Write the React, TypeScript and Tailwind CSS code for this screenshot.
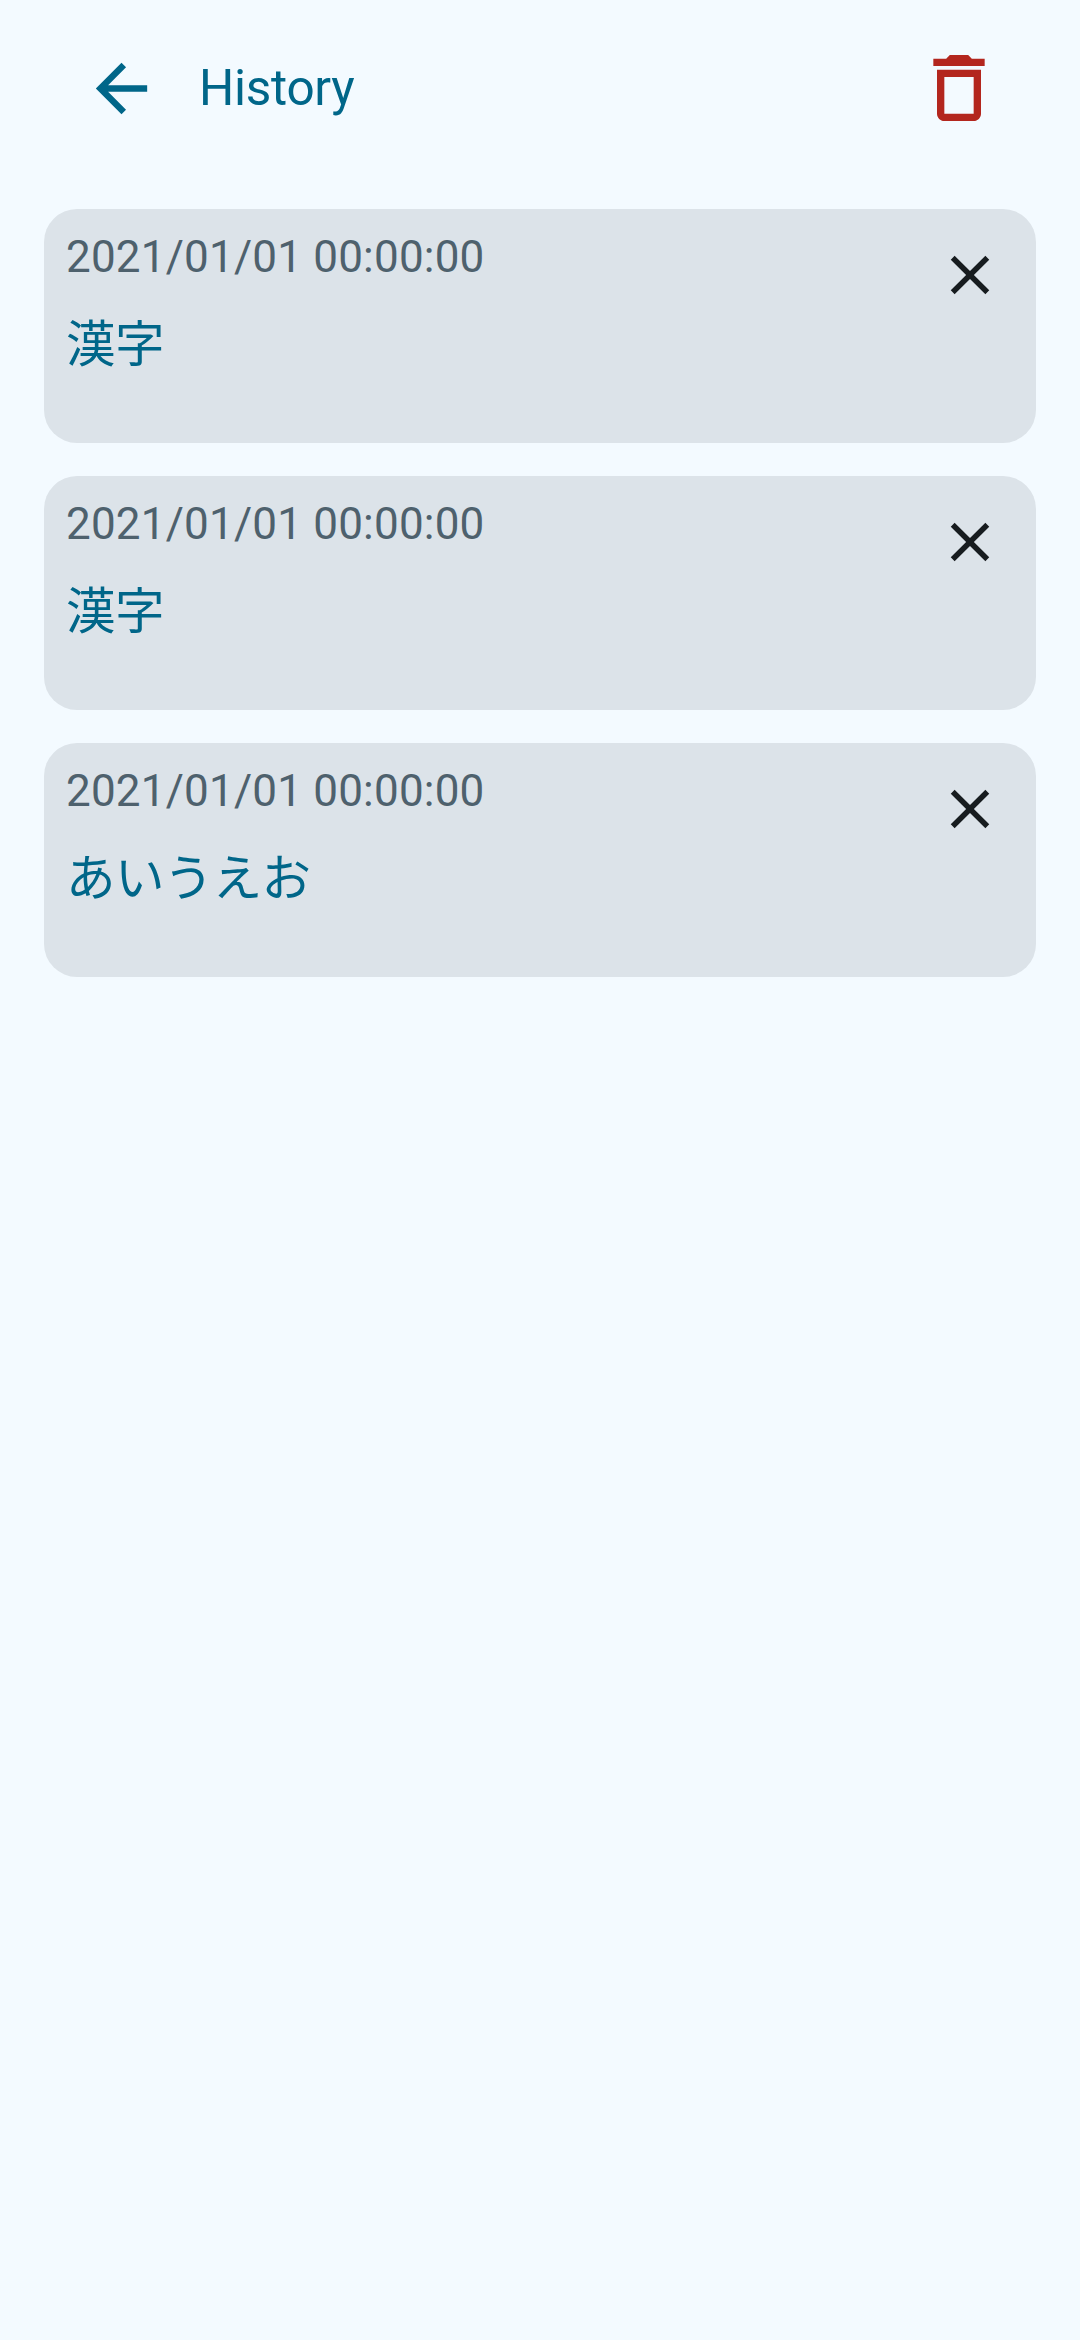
const items = ["漢字", "漢字", "あいうえお"];

export default function App() {
  return (
    <div className="min-h-[2340px] w-[1080px] bg-[#f3faff] px-11 font-['Roboto','Noto_Sans_CJK_JP',sans-serif]">
      <header className="flex h-[176px] items-center pl-[39px] pr-[33px]">
        <svg viewBox="0 0 24 24" className="size-[77px] shrink-0" fill="#006689">
          <path d="M20 11H7.830l5.590-5.590L12 4l-8 8 8 8 1.410-1.410L7.830 13H20v-2z" />
        </svg>
        <h1 className="ml-[39px] flex-1 text-[49.5px] leading-[66px] tracking-[-0.3px] text-[#006689]">History</h1>
        <svg viewBox="0 0 24 24" className="size-[88px] shrink-0" fill="#b3261e">
          <path d="M16 9v10H8V9h8m-1.500-6h-5l-1 1H5v2h14V4h-3.500l-1-1zM18 7H6v12c0 1.100.900 2 2 2h8c1.100 0 2-.900 2-2V7z" />
        </svg>
      </header>
      <main className="mt-[33px] flex flex-col gap-[33px]">
        {items.map((text, i) => (
          <article key={i} className="flex h-[234px] justify-between rounded-[33px] bg-[#dce3e9] pl-[22px] pr-[33px]">
            <div>
              <p className="mt-[18px] text-[44px] leading-[60px] tracking-[0.2px] text-[#4e616d]">2021/01/01 00:00:00</p>
              <p className="mt-[25px] text-[49.5px] leading-[66px] tracking-[-0.6px] text-[#006689]">{text}</p>
            </div>
            <svg viewBox="0 0 24 24" className="mt-[33px] size-[66px]" fill="#171c1f">
              <path d="M19 6.410L17.590 5 12 10.590 6.410 5 5 6.410 10.590 12 5 17.590 6.410 19 12 13.410 17.590 19 19 17.590 13.410 12z" />
            </svg>
          </article>
        ))}
      </main>
    </div>
  );
}
